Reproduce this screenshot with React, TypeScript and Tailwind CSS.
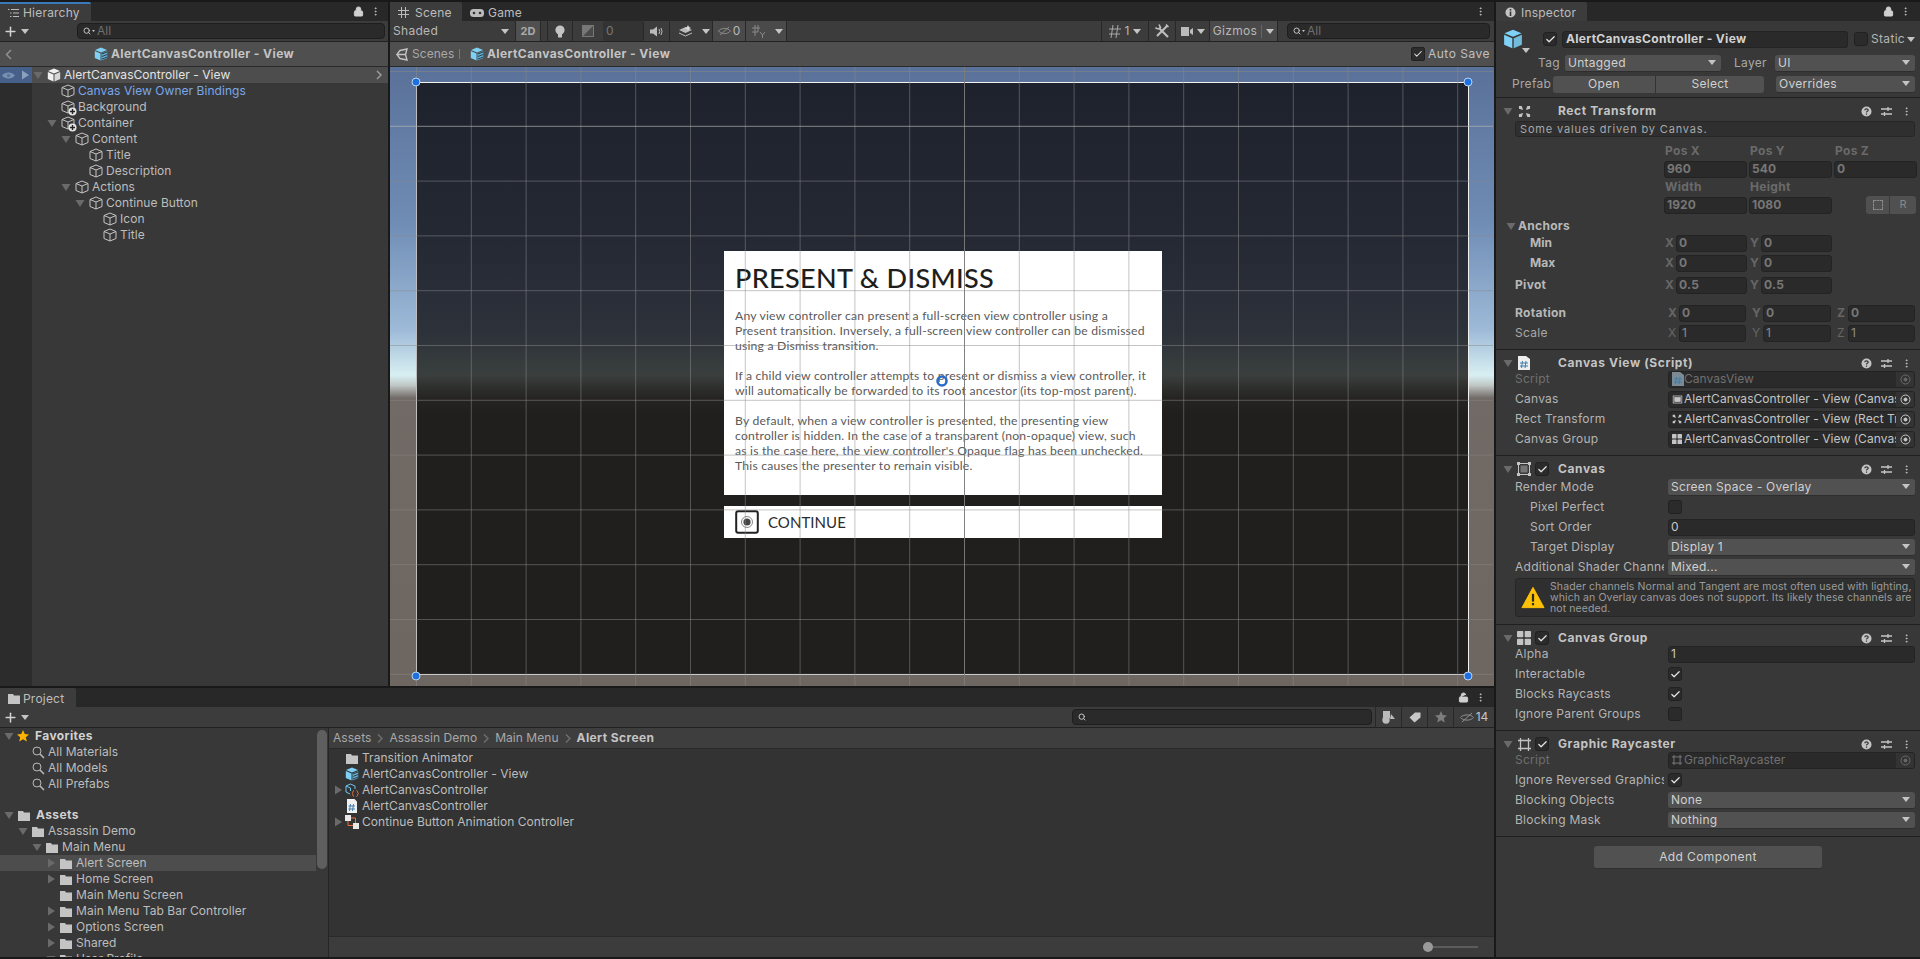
import React from "react";
import { Lock, LockOpen, EllipsisVertical, Plus, Search, Check } from "lucide-react";

const F = "font-['Inter','Liberation_Sans',sans-serif]";

function Tri({ open = true, color = "#6a6a6a" }: { open?: boolean; color?: string }) {
  return (
    <svg width="10" height="10" viewBox="0 0 10 10" className="shrink-0">
      <path d={open ? "M0.5 2 L9.5 2 L5 9 Z" : "M2 0.5 L9 5 L2 9.5 Z"} fill={color} />
    </svg>
  );
}
function Caret({ c = "#c4c4c4" }: { c?: string }) {
  return (
    <svg width="8" height="5" viewBox="0 0 8 5" className="shrink-0">
      <path d="M0 0H8L4 5Z" fill={c} />
    </svg>
  );
}
function Cube({ plus = false, color = "#c4c4c4", size = 14 }: { plus?: boolean; color?: string; size?: number }) {
  return (
    <span className="relative inline-block shrink-0" style={{ width: size, height: size }}>
      <svg width={size} height={size} viewBox="0 0 14 14" fill="none" stroke={color} strokeWidth="1">
        <path d="M7 1 L13 3.5 V10.5 L7 13 L1 10.5 V3.5 Z M1 3.5 L7 6 L13 3.5 M7 6 V13" />
      </svg>
      {plus && (
        <svg width="9" height="9" viewBox="0 0 9 9" className="absolute right-[-2px] bottom-[-2px]">
          <circle cx="4.5" cy="4.5" r="4" fill="#e4e4e4" />
          <path d="M4.5 2V7M2 4.5H7" stroke="#222" strokeWidth="1.4" />
        </svg>
      )}
    </span>
  );
}
function PrefabSolid({ size = 14, c = "#f0f0f0" }: { size?: number; c?: string }) {
  return (
    <svg width={size} height={size} viewBox="0 0 14 14" className="shrink-0">
      <path d="M7 .5 L13 3 L7 5.5 L1 3 Z" fill={c} />
      <path d="M.8 4 L6.5 6.4 V13.5 L.8 11 Z" fill={c} />
      <path d="M13.2 4 L7.5 6.4 V13.5 L13.2 11 Z" fill={c} opacity=".85" />
    </svg>
  );
}
function PrefabVariant({ size = 14 }: { size?: number }) {
  return (
    <svg width={size} height={size} viewBox="0 0 14 14" className="shrink-0">
      <path d="M7 .5 L13 3 L7 5.5 L1 3 Z" fill="#7fd0f5" />
      <path d="M.8 4 L6.5 6.4 V13.5 L.8 11 Z" fill="#7fd0f5" />
      <path d="M13.2 4 L7.5 6.4 V13.5 L13.2 11 Z" fill="#5fb4dc" />
      <path d="M8 7 L13 5 M8 9.5 L13 7.5 M8 12 L13 10" stroke="#2e3a44" strokeWidth="1" />
    </svg>
  );
}
function Folder({ c = "#c4c4c4" }: { c?: string }) {
  return (
    <svg width="12" height="11" viewBox="0 0 12 11" className="shrink-0">
      <path d="M0 1 H5 L6 2.5 H12 V11 H0 Z" fill={c} />
    </svg>
  );
}
function Mag() {
  return (
    <svg width="13" height="13" viewBox="0 0 13 13" fill="none" stroke="#b8b8b8" strokeWidth="1" className="shrink-0">
      <circle cx="5" cy="5" r="4" />
      <path d="M8 8 L12 12" strokeWidth="1.6" />
    </svg>
  );
}
function SearchBox({ w, text }: { w: string; text?: string }) {
  return (
    <div className={`${w} h-[16px] rounded-[4px] bg-[#2a2a2a] border border-[#1e1e1e] flex items-center pl-[5px] gap-[1px] shrink-0`}>
      <Search size={8} color="#c4c4c4" strokeWidth={3} className="shrink-0" />
      {text && (
        <svg width="3" height="2" viewBox="0 0 3 2" className="shrink-0"><path d="M0 0H3L1.500 2Z" fill="#c4c4c4" /></svg>
      )}
      {text && <span className="ml-[1px] text-[12px] text-[#6f6f6f] leading-none">{text}</span>}
    </div>
  );
}
function TabStrip({ children, right }: { children: React.ReactNode; right?: React.ReactNode }) {
  return (
    <div className="h-[19px] bg-[#282828] flex items-end justify-between shrink-0">
      <div className="flex h-full">{children}</div>
      {right}
    </div>
  );
}
function Tab({ w, active, children, blue }: { w: string; active?: boolean; children: React.ReactNode; blue?: boolean }) {
  return (
    <div className={`${w} h-full flex items-center rounded-tr-[2px] text-[12px] text-[#bdbdbd] tracking-[0.2px] ${active ? "bg-[#3c3c3c]" : ""} ${blue ? "border-t-2 border-[#3a79bb]" : "pt-[2px]"}`}>
      {children}
    </div>
  );
}
function TabMenu({ open = false, pr = "pr-[7px]" }: { open?: boolean; pr?: string }) {
  return (
    <div className={`flex items-center gap-[6px] ${pr} pb-[1px] self-center`}>
      {open ? <LockOpen size={11} color="#d0d0d0" fill="#d0d0d0" /> : <Lock size={11} color="#d0d0d0" fill="#d0d0d0" />}
      <EllipsisVertical size={11} color="#c4c4c4" />
    </div>
  );
}

const hierarchy: { t: string; d: number; open?: boolean; plus?: boolean; blue?: boolean }[] = [
  { t: "Canvas View Owner Bindings", d: 1, blue: true },
  { t: "Background", d: 1, plus: true },
  { t: "Container", d: 1, plus: true, open: true },
  { t: "Content", d: 2, open: true },
  { t: "Title", d: 3 },
  { t: "Description", d: 3 },
  { t: "Actions", d: 2, open: true },
  { t: "Continue Button", d: 3, open: true },
  { t: "Icon", d: 4 },
  { t: "Title", d: 4 },
];

function Hierarchy() {
  return (
    <div className="w-[388px] flex flex-col bg-[#383838] shrink-0">
      <TabStrip right={<TabMenu />}>
        <Tab w="w-[91px]" active blue>
          <svg width="11" height="10" viewBox="0 0 11 10" className="ml-[8px] mr-[4px]" stroke="#bbb">
            <path d="M3 1.5H11M5 5H11M5 8.5H11M0 1.5H1.5M2 5H3.5M2 8.5H3.5" />
          </svg>
          Hierarchy
        </Tab>
      </TabStrip>
      <div className="h-[21px] bg-[#3c3c3c] border-b border-[#222] flex items-center shrink-0">
        <Plus size={15} color="#d2d2d2" strokeWidth={2.4} className="ml-[3px]" />
        <span className="ml-[3px] mr-[48px]"><Caret /></span>
        <SearchBox w="w-[308px]" text="All" />
      </div>
      <div className="h-[25px] bg-[#4f4f4f] border-b border-[#2a2a2a] flex items-center relative shrink-0 justify-center">
        <svg width="7" height="11" viewBox="0 0 7 11" fill="none" stroke="#909090" strokeWidth="1.5" className="absolute left-[5px]"><path d="M6 1L1.5 5.5L6 10" /></svg>
        <span className="flex items-center gap-[3px] font-bold text-[12px] text-[#c4c4c4] tracking-[0.4px]"><PrefabVariant />AlertCanvasController - View</span>
      </div>
      <div className="flex flex-1">
        <div className="w-[32px] bg-[#2c2c2c] flex flex-col">
          <div className="h-[16px] bg-[#46608a] flex items-center pl-[2px] gap-[5px]">
            <svg width="13" height="9" viewBox="0 0 13 9"><path d="M0 4.5C3 .5 10 .5 13 4.5 10 8.5 3 8.5 0 4.5Z" fill="#7890b4" /><circle cx="6.5" cy="4.5" r="1.600" fill="#587298" /></svg>
            <Tri open={false} color="#8da0bc" />
          </div>
        </div>
        <div className="flex-1 flex flex-col">
          <div className="h-[16px] bg-[#4d4d4d] flex items-center relative text-[12px] text-[#e4e4e4]">
            <span className="ml-[1px] mr-[4px]"><Tri /></span>
            <PrefabSolid />
            <span className="ml-[3px]">AlertCanvasController - View</span>
            <svg width="6" height="10" viewBox="0 0 6 10" fill="none" stroke="#a0a0a0" strokeWidth="1.4" className="absolute right-[6px]"><path d="M1 1L5 5L1 9" /></svg>
          </div>
          {hierarchy.map((r, i) => (
            <div key={i} className={`h-[16px] flex items-center text-[12px] ${r.blue ? "text-[#7ba7e8]" : "text-[#bdbdbd]"}`} style={{ paddingLeft: 1 + 14 * r.d }}>
              <span className="w-[14px] flex">{r.open && <Tri />}</span>
              <Cube plus={r.plus} />
              <span className="ml-[3px]">{r.t}</span>
            </div>
          ))}
        </div>
      </div>
    </div>
  );
}

function ToolBtn({ children, w, bg, line = true }: { children?: React.ReactNode; w: string; bg?: string; line?: boolean }) {
  return (
    <div className={`${w} h-full flex items-center justify-center gap-[4px] ${bg ?? ""} ${line ? "border-r border-[#282828]" : ""} shrink-0 text-[12px] text-[#b8b8b8]`}>
      {children}
    </div>
  );
}

const vLines = Array.from({ length: 20 }, (_, i) => 26.5 + i * 54.8);
const hLines = Array.from({ length: 12 }, (_, i) => 4.5 + i * 54.8);

function SceneView() {
  return (
    <div className="flex-1 relative overflow-hidden bg-[linear-gradient(180deg,#5a7199_0%,#6f8cb5_25%,#9ebad8_42.5%,#d8eff2_49.8%,#c0c8c6_51.4%,#716a66_53.5%,#6e6660_100%)]">
      <div className="absolute left-[26px] right-[25px] top-[15px] bottom-[11px] border border-[#f2f2f2] bg-[linear-gradient(180deg,#1e222c_0%,#232833_25%,#2c313a_41.8%,#3a3f3e_49.4%,#2e2f2c_51.6%,#252422_53.3%,#211f1d_56%,#211f1d_100%)]" />
      <div className="absolute left-[334px] top-[184px] w-[438px] h-[244px] bg-white pl-[11px] pt-[12px] text-[#3a3a3a] font-['Lato','Open_Sans',sans-serif]">
        <div className="text-[27px] leading-[30px] text-[#1e1e1e] tracking-[0.35px] font-medium">PRESENT &amp; DISMISS</div>
        <div className="mt-[15px] text-[12.2px] leading-[15px] text-[#5a5a5a] tracking-[0.2px] whitespace-nowrap">
          <p>Any view controller can present a full-screen view controller using a</p>
          <p>Present transition. Inversely, a full-screen view controller can be dismissed</p>
          <p>using a Dismiss transition.</p>
          <p className="mt-[15px]">If a child view controller attempts to present or dismiss a view controller, it</p>
          <p>will automatically be forwarded to its root ancestor (its top-most parent).</p>
          <p className="mt-[15px]">By default, when a view controller is presented, the presenting view</p>
          <p>controller is hidden. In the case of a transparent (non-opaque) view, such</p>
          <p>as is the case here, the view controller's Opaque flag has been unchecked.</p>
          <p>This causes the presenter to remain visible.</p>
        </div>
      </div>
      <div className="absolute left-[334px] top-[439px] w-[438px] h-[32px] bg-white flex items-center pl-[11px] font-['Lato','Open_Sans',sans-serif]">
        <svg width="24" height="24" viewBox="0 0 24 24" className="shrink-0">
          <rect x="1.2" y="1.2" width="21.6" height="21.6" rx="2" fill="none" stroke="#222" strokeWidth="2" />
          <circle cx="12" cy="12" r="5.5" fill="none" stroke="#888" strokeWidth="1" />
          <circle cx="12" cy="12" r="3.6" fill="#444" />
        </svg>
        <span className="ml-[9px] text-[15px] text-[#2b2b2b]">CONTINUE</span>
      </div>
      <svg className="absolute inset-0" width="1103" height="619">
        {vLines.map((x, i) => (
          <line key={i} x1={x} x2={x} y1="0" y2="619" stroke={i === 10 ? "#7a7a7a" : "#8a8a8a"} strokeOpacity={i === 10 ? 0.95 : 0.5} />
        ))}
        {hLines.map((y, i) => (
          <line key={i} x1="0" x2="1103" y1={y} y2={y} stroke={i === 1 ? "#b0b0b0" : "#8a8a8a"} strokeOpacity={i === 1 ? 0.7 : 0.5} />
        ))}
        {[[26, 15], [1078, 15], [26, 609], [1078, 609]].map(([x, y], i) => (
          <circle key={i} cx={x} cy={y} r="4" fill="#1e6fe0" stroke="#bcd4f0" strokeWidth="1" />
        ))}
        <circle cx="552" cy="314" r="4.5" fill="none" stroke="#2a6cc6" strokeWidth="2.6" />
      </svg>
    </div>
  );
}

function Scene() {
  return (
    <div className="flex-1 flex flex-col bg-[#383838] ml-[2px] min-w-0">
      <TabStrip right={<div className="pr-[8px] self-center"><EllipsisVertical size={11} color="#c4c4c4" /></div>}>
        <Tab w="w-[72px]" active>
          <svg width="11" height="11" viewBox="0 0 11 11" stroke="#bbb" className="ml-[8px] mr-[6px]"><path d="M3.5 0V11M7.5 0V11M0 3.5H11M0 7.5H11" /></svg>
          Scene
        </Tab>
        <Tab w="w-[72px]">
          <svg width="14" height="10" viewBox="0 0 14 10" className="ml-[8px] mr-[4px]"><rect y="1" width="14" height="8" rx="3.5" fill="#bbb" /><circle cx="4" cy="5" r="1.3" fill="#333" /><circle cx="10" cy="5" r="1.3" fill="#333" /></svg>
          Game
        </Tab>
      </TabStrip>
      <div className="h-[21px] bg-[#3c3c3c] border-b border-[#222] flex items-center shrink-0">
        <ToolBtn w="w-[126px]"><div className="w-full flex items-center justify-between pl-[3px] pr-[6px] tracking-[0.3px]"><span>Shaded</span><Caret /></div></ToolBtn>
        <ToolBtn w="w-[25px]" bg="bg-[#505050]"><b className="text-[#aaa] text-[11px]">2D</b></ToolBtn>
        <span className="w-[7px] h-full border-r border-[#282828] shrink-0" />
        <ToolBtn w="w-[25px]"><svg width="10" height="13" viewBox="0 0 10 13"><circle cx="5" cy="5" r="4.6" fill="#c4c4c4" /><rect x="3" y="9" width="4" height="3.5" fill="#c4c4c4" /></svg></ToolBtn>
        <ToolBtn w="w-[30px]" line={false}><svg width="12" height="12" viewBox="0 0 12 12"><rect width="12" height="12" fill="#777" /><path d="M11 1L1 11H11Z" fill="#4a4a4a" /></svg></ToolBtn>
        <div className="w-[41px] h-full bg-[#333] rounded-[3px] text-[#777] text-[12px] flex items-center pl-[3px] border-r border-[#282828] shrink-0">0</div>
        <ToolBtn w="w-[26px]"><svg width="13" height="11" viewBox="0 0 13 11"><path d="M0 3.5H3L7 .5V10.5L3 7.5H0Z" fill="#bbb" /><path d="M9 3Q10.5 5.5 9 8M11 2Q13 5.5 11 9" stroke="#bbb" fill="none" /></svg></ToolBtn>
        <ToolBtn w="w-[30px]" line={false}><svg width="13" height="12" viewBox="0 0 13 12"><path d="M0 5L6.5 8L13 5L6.5 2Z" fill="#bbb" /><path d="M0 8L6.5 11L13 8" stroke="#bbb" fill="none" /><path d="M9 0L10 2L12 3L10 4L9 6L8 4L6 3L8 2Z" fill="#ddd" /></svg></ToolBtn>
        <ToolBtn w="w-[13px]"><Caret /></ToolBtn>
        <ToolBtn w="w-[33px]" bg="bg-[#4a4a4a]"><svg width="13" height="10" viewBox="0 0 13 10" fill="none" stroke="#8a8a8a"><path d="M.5 5C3 1.5 10 1.5 12.5 5 10 8.5 3 8.5 .5 5ZM2 9L11 1" /></svg><span className="text-[12px] -ml-[2px]">0</span></ToolBtn>
        <ToolBtn w="w-[25px]" bg="bg-[#4a4a4a]" line={false}><svg width="13" height="13" viewBox="0 0 13 13" stroke="#8a8a8a" fill="none"><path d="M3 0V11M6 0V7M0 3H8M0 7H6M8 7L10.5 10L13 7M10.5 10V13" /></svg></ToolBtn>
        <ToolBtn w="w-[16px]" bg="bg-[#4a4a4a]"><Caret /></ToolBtn>
        <div className="flex-1" />
        <div className="h-full w-[48px] flex items-center justify-center gap-[4px] border-x border-[#282828] text-[12px] text-[#b8b8b8] shrink-0">
          <svg width="12" height="13" viewBox="0 0 12 13" stroke="#a8a8a8" fill="none"><path d="M4 0L2 13M9 0L7 13M0 4H12M0 9H11" /></svg>1<Caret />
        </div>
        <ToolBtn w="w-[27px]">
          <svg width="14" height="14" viewBox="0 0 14 14" fill="none" stroke="#bdbdbd" strokeWidth="2.200">
            <path d="M4 4L13 13" />
            <path d="M.5 3.500A3.200 3.200 0 0 0 5.500 3.500L4 .5" strokeWidth="1.600" />
            <path d="M12.500 1.500L2 12" />
            <path d="M11 .5L13.500 3" strokeWidth="1.500" />
          </svg>
        </ToolBtn>
        <ToolBtn w="w-[34px]"><svg width="12" height="9" viewBox="0 0 12 9"><rect width="8" height="9" fill="#bbb" /><path d="M9 3L12 1V8L9 6Z" fill="#bbb" /></svg><Caret /></ToolBtn>
        <ToolBtn w="w-[68px]" bg="bg-[#4a4a4a]"><span className="tracking-[0.3px]">Gizmos</span><span className="w-px h-[13px] bg-[#666]" /><Caret /></ToolBtn>
        <span className="w-[9px] shrink-0" />
        <SearchBox w="w-[203px]" text="All" />
        <span className="w-[4px] shrink-0" />
      </div>
      <div className="h-[25px] bg-[#4f4f4f] border-b border-[#2a2a2a] flex items-center text-[12px] shrink-0 pl-[6px]">
        <svg width="13" height="13" viewBox="0 0 13 13" fill="none" stroke="#c4c4c4" strokeWidth="1.4"><path d="M11 1L4 2.5L.8 6.5L4 10.5L11 12L9.5 6.5ZM.8 6.5H9.5" /></svg>
        <span className="ml-[3px] text-[#a8a8a8] w-[40px]">Scenes</span>
        <span className="ml-[7px] mr-[10px] w-px h-[10px] bg-[#7a7a7a]" />
        <PrefabVariant />
        <span className="ml-[3px] font-bold text-[#c4c4c4] tracking-[0.4px]">AlertCanvasController - View</span>
        <div className="ml-auto flex items-center pr-[4px]">
          <span className="w-[14px] h-[14px] bg-[#2d2d2d] border border-[#222] rounded-[2px] flex items-center justify-center"><Check size={10} color="#e0e0e0" strokeWidth={2.5} /></span>
          <span className="ml-[3px] text-[#c0c0c0] tracking-[0.5px]">Auto Save</span>
        </div>
      </div>
      <SceneView />
    </div>
  );
}

const tree: { t: string; d: number; arrow?: "o" | "c"; sel?: boolean }[] = [
  { t: "Assassin Demo", d: 1, arrow: "o" },
  { t: "Main Menu", d: 2, arrow: "o" },
  { t: "Alert Screen", d: 3, arrow: "c", sel: true },
  { t: "Home Screen", d: 3, arrow: "c" },
  { t: "Main Menu Screen", d: 3 },
  { t: "Main Menu Tab Bar Controller", d: 3, arrow: "c" },
  { t: "Options Screen", d: 3, arrow: "c" },
  { t: "Shared", d: 3, arrow: "c" },
  { t: "User Profile", d: 3, arrow: "o" },
];

function Project() {
  return (
    <div className="h-[269px] mt-[2px] flex flex-col bg-[#383838] shrink-0">
      <TabStrip right={<TabMenu open pr="pr-[8px]" />}>
        <Tab w="w-[76px]" active>
          <span className="ml-[8px] mr-[3px]"><Folder /></span>
          Project
        </Tab>
      </TabStrip>
      <div className="h-[21px] bg-[#3c3c3c] border-b border-[#222] flex items-center shrink-0">
        <Plus size={15} color="#d2d2d2" strokeWidth={2.4} className="ml-[3px]" />
        <span className="ml-[3px]"><Caret /></span>
        <div className="ml-auto flex items-center h-full">
          <SearchBox w="w-[300px]" />
          <span className="w-[3px]" />
          <div className="w-[26px] h-full border-l border-[#282828] flex items-center justify-center"><svg width="13" height="13" viewBox="0 0 13 13" fill="#bbb"><rect x="1" width="7" height="7" /><circle cx="4" cy="9" r="3.7" /><path d="M9 3L13 8H8Z" /></svg></div>
          <div className="w-[26px] h-full border-l border-[#282828] flex items-center justify-center"><svg width="12" height="11" viewBox="0 0 12 11" fill="#c8c8c8"><path d="M6 .5H11.5V5.5L5.5 10.5L.5 5.5Z" /></svg></div>
          <div className="w-[26px] h-full border-l border-[#282828] flex items-center justify-center"><svg width="12" height="12" viewBox="0 0 24 24" fill="#7d7d7d"><path d="M12 0l3.5 8 8.5.8-6.4 5.6 2 8.6L12 18.4 4.400 23l2-8.600L0 8.800 8.500 8z" /></svg></div>
          <div className="w-[41px] h-full border-l border-[#282828] flex items-center justify-center gap-[2px] text-[12px] text-[#c4c4c4]"><svg width="14" height="11" viewBox="0 0 14 11" fill="none" stroke="#8f8f8f"><path d="M.5 5.500C3 2 11 2 13.500 5.500 11 9 3 9 .5 5.500ZM2 10L12 1" /></svg>14</div>
        </div>
      </div>
      <div className="flex-1 flex min-h-0">
        <div className="w-[329px] shrink-0 border-r border-[#252525] relative overflow-hidden flex flex-col">
          <div className="h-[16px] flex items-center text-[12px] font-bold text-[#d2d2d2] pl-[4px] shrink-0 tracking-[0.4px]">
            <Tri /><span className="ml-[3px] mr-[6px]"><svg width="12" height="12" viewBox="0 0 24 24" fill="#ffb300"><path d="M12 0l3.500 8 8.500.8-6.400 5.600 2 8.600L12 18.400 4.400 23l2-8.600L0 8.800 8.500 8z" /></svg></span>Favorites
          </div>
          {["All Materials", "All Models", "All Prefabs"].map((t) => (
            <div key={t} className="h-[16px] flex items-center text-[12px] text-[#bdbdbd] pl-[32px] shrink-0"><Mag /><span className="ml-[3px]">{t}</span></div>
          ))}
          <div className="h-[15px] shrink-0" />
          <div className="h-[16px] flex items-center text-[12px] font-bold text-[#d2d2d2] pl-[4px] shrink-0 tracking-[0.4px]">
            <Tri /><span className="ml-[4px] mr-[6px]"><Folder /></span>Assets
          </div>
          {tree.map((r) => (
            <div key={r.t} className={`h-[16px] flex items-center text-[12px] text-[#bdbdbd] shrink-0 w-[316px] ${r.sel ? "bg-[#4d4d4d]" : ""}`} style={{ paddingLeft: 4 + 14 * r.d }}>
              <span className="w-[10px] flex">{r.arrow && <Tri open={r.arrow === "o"} />}</span>
              <span className="ml-[4px] mr-[4px]"><Folder /></span>
              {r.t}
            </div>
          ))}
          <div className="absolute left-[317px] top-[2px] w-[10px] h-[139px] rounded-[5px] bg-[#5f5f5f]" />
        </div>
        <div className="flex-1 flex flex-col min-w-0">
          <div className="h-[21px] bg-[#3e3e3e] border-b border-[#2a2a2a] flex items-center pl-[4px] text-[12px] text-[#a8a8a8] shrink-0">
            {["Assets", "Assassin Demo", "Main Menu"].map((t) => (
              <React.Fragment key={t}>
                <span>{t}</span>
                <svg width="6" height="9" viewBox="0 0 6 9" fill="none" stroke="#6e6e6e" strokeWidth="1.5" className="mx-[6px]"><path d="M1 .5L5 4.500L1 8.500" /></svg>
              </React.Fragment>
            ))}
            <b className="text-[#c4c4c4] tracking-[0.4px]">Alert Screen</b>
          </div>
          <div className="flex-1 bg-[#333333] pt-[1px] text-[12px] text-[#bdbdbd]">
            <Asset arrow={false} icon={<span className="ml-[1px]"><Folder /></span>} t="Transition Animator" />
            <Asset arrow={false} icon={<PrefabVariant />} t="AlertCanvasController - View" />
            <Asset arrow icon={
              <svg width="14" height="14" viewBox="0 0 14 14" fill="none" stroke="#6ec6f0"><path d="M5.500 1L10 3V6M5.500 1L1 3V9L5 11M1 3L5.500 5V8" /><path d="M9 7.500C7.500 7.500 8.500 10 7 10.500 8.500 11 7.500 13.500 9 13.500M11.500 7.500C13 7.500 12 10 13.500 10.500 12 11 13 13.500 11.500 13.500" stroke="#f0703c" /></svg>
            } t="AlertCanvasController" />
            <Asset arrow={false} icon={
              <svg width="14" height="14" viewBox="0 0 14 14"><path d="M2 0H9.500L12 2.500V14H2Z" fill="#f0f0f0" /><path d="M5.500 5L4.500 12M8.500 5L7.500 12M3.500 7H10M3.500 10H10" stroke="#3f7fae" /></svg>
            } t="AlertCanvasController" />
            <Asset arrow icon={
              <svg width="14" height="14" viewBox="0 0 14 14"><rect x="0" y="0" width="6" height="6" fill="#e8e8e8" /><rect x="8" y="8" width="6" height="6" fill="#e8e8e8" /><path d="M3 6V10.500H8M6 3H10.500V8" stroke="#f0703c" fill="none" /></svg>
            } t="Continue Button Animation Controller" />
          </div>
          <div className="h-[21px] bg-[#3c3c3c] border-t border-[#2a2a2a] relative shrink-0 flex items-center justify-end pr-[16px]">
            <div className="w-[55px] h-[2px] bg-[#5c5c5c] relative"><span className="absolute left-0 top-[-4px] w-[10px] h-[10px] rounded-full bg-[#9a9a9a]" /></div>
          </div>
        </div>
      </div>
    </div>
  );
}
function Asset({ arrow, icon, t }: { arrow: boolean; icon: React.ReactNode; t: string }) {
  return (
    <div className="h-[16px] flex items-center pl-[4px]">
      <span className="w-[9px] mr-[3px] flex">{arrow && <Tri open={false} />}</span>
      <span className="w-[14px] flex">{icon}</span>
      <span className="ml-[3px]">{t}</span>
    </div>
  );
}

/* inspector */
function Chk({ on = true }: { on?: boolean }) {
  return (
    <span className="w-[14px] h-[14px] rounded-[3px] bg-[#2b2b2b] border border-[#212121] flex items-center justify-center shrink-0">
      {on && <Check size={11} color="#e6e6e6" strokeWidth={2.6} />}
    </span>
  );
}
function Drop({ text, cls = "" }: { text: string; cls?: string }) {
  return (
    <div className={`h-[17px] rounded-[3px] bg-[#515151] border-b border-[#2e2e2e] flex items-center justify-between pl-[3px] pr-[5px] text-[12px] text-[#d0d0d0] ${cls}`}>
      <span className="tracking-[0.25px] whitespace-nowrap">{text}</span>
      <Caret />
    </div>
  );
}
function Num({ v, w, dim = false, light = false }: { v: string; w: string; dim?: boolean; light?: boolean }) {
  return (
    <div className={`${w} h-[17px] rounded-[3px] bg-[#2a2a2a] border border-[#232323] pl-[2px] flex items-center text-[12px] shrink-0 ${light ? "text-[#c8c8c8]" : dim ? "text-[#8a8a8a]" : "text-[#777] font-bold"}`}>{v}</div>
  );
}
function Row({ label, children, bold, ind, dim }: { label: string; children?: React.ReactNode; bold?: boolean; ind?: boolean; dim?: boolean }) {
  return (
    <div className="h-[20px] flex items-center pr-[5px]">
      <span className={`whitespace-nowrap overflow-hidden text-[12px] tracking-[0.25px] ${ind ? "pl-[34px]" : "pl-[19px]"} w-[168px] mr-[4px] shrink-0 ${bold ? "font-bold text-[#b8b8b8]" : dim ? "text-[#6f6f6f]" : "text-[#b4b4b4]"}`}>{label}</span>
      <div className="flex-1 min-w-0 flex items-center">{children}</div>
    </div>
  );
}
function ObjField({ icon, text, dim }: { icon: React.ReactNode; text: string; dim?: boolean }) {
  return (
    <div className="flex-1 min-w-0 h-[17px] rounded-[3px] bg-[#2a2a2a] border border-[#232323] flex items-center overflow-hidden text-[12px]">
      <span className="w-[15px] pl-[3px] flex shrink-0">{icon}</span>
      <span className={`flex-1 min-w-0 overflow-hidden whitespace-nowrap ${dim ? "text-[#707070]" : "text-[#c4c4c4]"}`}>{text}</span>
      <span className="w-[18px] h-full bg-[#333] flex items-center justify-center shrink-0">
        <svg width="11" height="11" viewBox="0 0 11 11" fill="none" stroke={dim ? "#6a6a6a" : "#c8c8c8"}><circle cx="5.500" cy="5.500" r="4.500" /><circle cx="5.500" cy="5.500" r="1.500" fill={dim ? "#6a6a6a" : "#c8c8c8"} /></svg>
      </span>
    </div>
  );
}
function Header({ icon, title, chk }: { icon: React.ReactNode; title: string; chk?: boolean }) {
  return (
    <div className="h-[16px] flex items-center relative">
      <span className="ml-[7px] mr-[4px]"><Tri /></span>
      <span className="w-[14px] flex justify-center">{icon}</span>
      <span className="ml-[4px] w-[20px] flex">{chk && <Chk />}</span>
      <span className="ml-[3px] text-[12px] font-bold text-[#c4c4c4] tracking-[0.6px]">{title}</span>
      <div className="ml-auto flex items-center gap-[9px] pr-[8px]">
        <svg width="11" height="11" viewBox="0 0 11 11"><circle cx="5.500" cy="5.500" r="5" fill="#c4c4c4" /><path d="M3.800 4.300C3.800 2.500 7.200 2.500 7.200 4.300 7.200 5.400 5.500 5.300 5.500 6.500M5.500 7.500V8.800" stroke="#333" strokeWidth="1.200" fill="none" /></svg>
        <svg width="11" height="11" viewBox="0 0 11 11" stroke="#c4c4c4"><path d="M0 3H11M0 8H11M7 1V5M3.500 6V10" strokeWidth="1.300" /></svg>
        <EllipsisVertical size={11} color="#c4c4c4" />
      </div>
    </div>
  );
}
function Sec({ children, pt = "pt-[5px]", h }: { children: React.ReactNode; pt?: string; h?: string }) {
  return <div className={`${pt} ${h ?? ""} border-b border-[#1f1f1f] shrink-0`}>{children}</div>;
}
function Axis({ a, v, w, dim }: { a: string; v: string; w: string; dim?: boolean }) {
  return (
    <span className="flex items-center">
      <span className={`w-[11px] text-[12px] shrink-0 tracking-normal ${dim ? "text-[#666] font-normal" : "font-bold text-[#666]"}`}>{a}</span>
      <Num v={v} w={w} dim={dim} />
    </span>
  );
}
const CanvasIcon = () => (
  <svg width="14" height="14" viewBox="0 0 14 14" fill="none" stroke="#c4c4c4"><rect x="1.500" y="1.500" width="11" height="11" /><rect x="3.500" y="3.500" width="7" height="7" fill="#c4c4c4" stroke="none" opacity=".45" /><path d="M0 0h3v3H0zM11 0h3v3h-3zM0 11h3v3H0zM11 11h3v3h-3z" fill="#c4c4c4" stroke="none" /></svg>
);
const GroupIcon = ({ s = 14 }: { s?: number }) => (
  <svg width={s} height={s} viewBox="0 0 14 14" fill="#c4c4c4"><rect width="6.300" height="6.300" rx=".8" /><rect x="7.700" width="6.300" height="6.300" rx=".8" /><rect y="7.700" width="6.300" height="6.300" rx=".8" /><rect x="7.700" y="7.700" width="6.300" height="6.300" rx=".8" /></svg>
);
const Dots = ({ s = 13 }: { s?: number }) => (
  <svg width={s} height={s} viewBox="0 0 14 14" fill="#c4c4c4">
    <path d="M5.500 5.500L1 4V1H4Z" />
    <path d="M8.500 5.500L13 4V1H10Z" />
    <path d="M5.500 8.500L1 10V13H4Z" />
    <path d="M8.500 8.500L13 10V13H10Z" />
  </svg>
);
const Script = ({ dim }: { dim?: boolean }) => (
  <svg width="12" height="14" viewBox="0 0 12 14"><path d="M0 0H8L12 3V14H0Z" fill={dim ? "#7c8a94" : "#eeeeee"} /><path d="M4.500 5L3.500 12M8 5L7 12M2 7H10M2 10H10" stroke="#3f7fae" /></svg>
);

function Inspector() {
  return (
    <div className="w-[424px] ml-[2px] flex flex-col bg-[#383838] shrink-0 h-[955px]">
      <TabStrip right={<TabMenu pr="pr-[9px]" />}>
        <Tab w="w-[91px]" active>
          <svg width="11" height="11" viewBox="0 0 11 11" className="ml-[9px] mr-[5px]"><circle cx="5.500" cy="5.500" r="5" fill="#c4c4c4" /><rect x="4.700" y="4.500" width="1.600" height="4.500" fill="#333" /><rect x="4.700" y="2" width="1.600" height="1.600" fill="#333" /></svg>
          Inspector
        </Tab>
      </TabStrip>
      <Sec pt="pt-0" h="h-[77px]">
        <div className="h-[36px] flex items-center relative pr-[5px]">
          <span className="ml-[7px] mr-[20px] relative"><PrefabSolid size={20} c="#7ed2f7" /><span className="absolute left-[19px] top-[19px]"><Caret /></span></span>
          <Chk />
          <div className="ml-[5px] w-[288px] h-[17px] bg-[#2a2a2a] border border-[#232323] rounded-[3px] pl-[3px] flex items-center text-[12px] font-bold text-[#d2d2d2] tracking-[0.3px]">AlertCanvasController - View</div>
          <span className="ml-[6px]"><Chk on={false} /></span>
          <span className="ml-[3px] text-[12px] text-[#b4b4b4] tracking-[0.3px]">Static</span>
          <span className="ml-[2px]"><Caret /></span>
        </div>
        <div className="h-[18px] flex items-center pr-[5px] -mt-[3px]">
          <span className="ml-[42px] w-[24px] text-[12px] text-[#a8a8a8] tracking-[0.3px]">Tag</span>
          <Drop text="Untagged" cls="w-[156px] ml-[3px]" />
          <span className="ml-[13px] w-[36px] text-[12px] text-[#a8a8a8] tracking-[0.3px]">Layer</span>
          <Drop text="UI" cls="ml-[5px] flex-1" />
        </div>
        <div className="h-[24px] flex items-center pr-[5px]">
          <span className="ml-[16px] w-[41px] text-[12px] text-[#a8a8a8] tracking-[0.3px]">Prefab</span>
          <div className="h-[17px] w-[103px] bg-[#515151] rounded-l-[3px] border-r border-[#333] text-center text-[12px] leading-[16px] text-[#d0d0d0] tracking-[0.3px]">Open</div>
          <div className="h-[17px] w-[108px] bg-[#515151] rounded-r-[3px] text-center text-[12px] leading-[16px] text-[#d0d0d0] tracking-[0.3px]">Select</div>
          <Drop text="Overrides" cls="ml-[12px] flex-1" />
        </div>
      </Sec>
      <Sec h="h-[252px]">
        <Header icon={<Dots />} title="Rect Transform" />
        <div className="ml-[19px] mr-[5px] h-[16px] mt-[2px] bg-[#2f2f2f] border border-[#262626] rounded-[3px] pl-[4px] text-[11px] leading-[14px] text-[#a8a8a8] tracking-[0.85px]">Some values driven by Canvas.</div>
        <div className="h-[16px] mt-[6px] flex items-center pl-[169px] text-[12px] font-bold text-[#6a6a6a] tracking-[0.3px]">
          <span className="w-[85px]">Pos X</span><span className="w-[85px]">Pos Y</span><span>Pos Z</span>
        </div>
        <div className="h-[20px] flex items-center pl-[168px] gap-[2px]">
          <Num v="960" w="w-[83px]" /><Num v="540" w="w-[83px]" /><Num v="0" w="w-[83px]" />
        </div>
        <div className="h-[16px] flex items-center pl-[169px] text-[12px] font-bold text-[#6a6a6a] tracking-[0.3px]">
          <span className="w-[85px]">Width</span><span>Height</span>
        </div>
        <div className="h-[20px] flex items-center pl-[168px] gap-[2px]">
          <Num v="1920" w="w-[83px]" /><Num v="1080" w="w-[83px]" />
          <div className="ml-[32px] flex h-[18px] rounded-[3px] overflow-hidden">
            <span className="w-[24px] bg-[#505050] border-r border-[#3a3a3a] flex items-center justify-center"><span className="w-[10px] h-[10px] border border-dashed border-[#8a8a8a]" /></span>
            <span className="w-[26px] bg-[#505050] text-center text-[11px] leading-[16px] text-[#888]">R</span>
          </div>
        </div>
        <div className="h-[16px] mt-[3px] flex items-center pl-[10px] text-[12px] font-bold text-[#b8b8b8] tracking-[0.3px]">
          <span className="mr-[2px]"><Tri /></span>Anchors
        </div>
        <div className="h-[18px] flex items-center pl-[34px] text-[12px] font-bold text-[#b8b8b8]">
          <span className="w-[135px]">Min</span>
          <Axis a="X" v="0" w="w-[71px]" /><span className="w-[3px]" /><Axis a="Y" v="0" w="w-[71px]" />
        </div>
        <div className="h-[20px] mt-[1px] flex items-center pl-[34px] text-[12px] font-bold text-[#b8b8b8]">
          <span className="w-[135px]">Max</span>
          <Axis a="X" v="0" w="w-[71px]" /><span className="w-[3px]" /><Axis a="Y" v="0" w="w-[71px]" />
        </div>
        <div className="h-[20px] mt-[2px] flex items-center pl-[19px] text-[12px] font-bold text-[#b8b8b8] tracking-[0.3px]">
          <span className="w-[150px]">Pivot</span>
          <Axis a="X" v="0.5" w="w-[71px]" /><span className="w-[3px]" /><Axis a="Y" v="0.5" w="w-[71px]" />
        </div>
        <div className="h-[20px] mt-[8px] flex items-center pl-[19px] text-[12px] font-bold text-[#b8b8b8] tracking-[0.3px]">
          <span className="w-[153px]">Rotation</span>
          <Axis a="X" v="0" w="w-[67px]" /><span className="w-[6px]" /><Axis a="Y" v="0" w="w-[68px]" /><span className="w-[6px]" /><Axis a="Z" v="0" w="w-[67px]" />
        </div>
        <div className="h-[20px] flex items-center pl-[19px] text-[12px] text-[#a8a8a8] tracking-[0.3px]">
          <span className="w-[153px]">Scale</span>
          <Axis a="X" v="1" w="w-[67px]" dim /><span className="w-[6px]" /><Axis a="Y" v="1" w="w-[68px]" dim /><span className="w-[6px]" /><Axis a="Z" v="1" w="w-[67px]" dim />
        </div>
      </Sec>
      <Sec h="h-[106px]">
        <Header icon={<Script />} title="Canvas View (Script)" />
        <div className="-mt-[2px]">
          <Row label="Script" dim><ObjField dim icon={<Script dim />} text="CanvasView" /></Row>
          <Row label="Canvas"><ObjField icon={<svg width="11" height="11" viewBox="0 0 14 14" fill="none" stroke="#c4c4c4"><rect x="1.500" y="2.500" width="11" height="9" /><rect x="3.500" y="4.500" width="7" height="5" fill="#c4c4c4" /></svg>} text="AlertCanvasController - View (Canvas)" /></Row>
          <Row label="Rect Transform"><ObjField icon={<Dots s={10} />} text="AlertCanvasController - View (Rect Transform)" /></Row>
          <Row label="Canvas Group"><ObjField icon={<GroupIcon s={10} />} text="AlertCanvasController - View (Canvas Group)" /></Row>
        </div>
      </Sec>
      <Sec h="h-[169px]">
        <Header icon={<CanvasIcon />} title="Canvas" chk />
        <Row label="Render Mode"><Drop text="Screen Space - Overlay" cls="flex-1" /></Row>
        <Row label="Pixel Perfect" ind><Chk on={false} /></Row>
        <Row label="Sort Order" ind><div className="flex-1"><Num v="0" w="w-full" light /></div></Row>
        <Row label="Target Display" ind><Drop text="Display 1" cls="flex-1" /></Row>
        <Row label="Additional Shader Channels"><Drop text="Mixed..." cls="flex-1" /></Row>
        <div className="ml-[19px] mr-[5px] mt-[1px] h-[39px] bg-[#2f2f2f] border border-[#262626] rounded-[3px] flex items-center">
          <svg width="24" height="23" viewBox="0 0 26 24" className="ml-[5px] mr-[5px] shrink-0"><path d="M13 1L25 23H1Z" fill="#ffc107" stroke="#ffc107" strokeLinejoin="round" /><rect x="11.800" y="8" width="2.400" height="8.500" fill="#2a2a2a" /><rect x="11.800" y="18" width="2.400" height="2.400" fill="#2a2a2a" /></svg>
          <div className="text-[10.500px] leading-[11px] text-[#9c9c9c] tracking-[0.1px] whitespace-nowrap">
            Shader channels Normal and Tangent are most often used with lighting,<br />which an Overlay canvas does not support. Its likely these channels are<br />not needed.
          </div>
        </div>
      </Sec>
      <Sec h="h-[106px]">
        <Header icon={<GroupIcon />} title="Canvas Group" chk />
        <div className="-mt-[2px]">
          <Row label="Alpha"><div className="flex-1"><Num v="1" w="w-full" light /></div></Row>
          <Row label="Interactable"><Chk /></Row>
          <Row label="Blocks Raycasts"><Chk /></Row>
          <Row label="Ignore Parent Groups"><Chk on={false} /></Row>
        </div>
      </Sec>
      <Sec h="h-[106px]">
        <Header icon={<svg width="13" height="13" viewBox="0 0 13 13" fill="none" stroke="#c4c4c4" strokeWidth="1.300"><path d="M2.500 0V13M10.500 0V13M0 2.500H13M0 10.500H13" /></svg>} title="Graphic Raycaster" chk />
        <div className="-mt-[2px]">
          <Row label="Script" dim><ObjField dim icon={<svg width="10" height="10" viewBox="0 0 13 13" fill="none" stroke="#777" strokeWidth="1.300"><path d="M2.500 0V13M10.500 0V13M0 2.500H13M0 10.500H13" /></svg>} text="GraphicRaycaster" /></Row>
          <Row label="Ignore Reversed Graphics"><Chk /></Row>
          <Row label="Blocking Objects"><Drop text="None" cls="flex-1" /></Row>
          <Row label="Blocking Mask"><Drop text="Nothing" cls="flex-1" /></Row>
        </div>
      </Sec>
      <div className="flex justify-center pt-[9px]">
        <div className="w-[228px] h-[23px] bg-[#515151] border-b border-[#2e2e2e] rounded-[3px] text-center text-[12px] leading-[22px] text-[#d0d0d0] tracking-[0.4px]">Add Component</div>
      </div>
    </div>
  );
}

export default function App() {
  return (
    <div className={`${F} w-[1920px] h-[959px] bg-[#191919] flex pt-[2px] overflow-hidden tracking-[0.05px]`}>
      <div className="w-[1494px] flex flex-col shrink-0">
        <div className="h-[684px] flex shrink-0">
          <Hierarchy />
          <Scene />
        </div>
        <Project />
      </div>
      <Inspector />
    </div>
  );
}
